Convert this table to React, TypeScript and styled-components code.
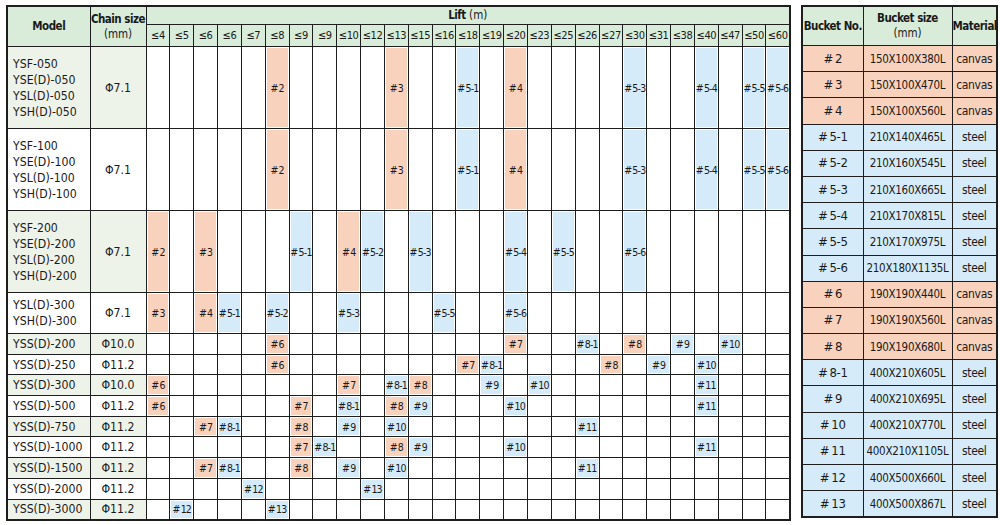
import * as React from 'react'
import styled, { createGlobalStyle } from 'styled-components'

const GlobalStyle = createGlobalStyle`
  body {
    margin: 0;
    background: #ffffff;
    font-family: "DejaVu Sans Condensed", "DejaVu Sans", sans-serif;
    font-stretch: condensed;
    color: #1a1a1a;
  }
`

const HEADER = '#d9ecd9'
const SHADE = '#eef3ea'
const SALMON = '#f9d2be'
const BLUE = '#d6ebf9'
const LINE = '#1e1e1e'

type Kind = 's' | 'b'

interface IRow {
  models: string[]
  chain: string
  height: number
  shaded: boolean
  cells: Record<number, [string, Kind]>
}

const lifts = ['4', '5', '6', '6', '7', '8', '9', '9', '10', '12', '13', '15', '16', '18', '19', '20', '23', '25', '26', '27', '30', '31', '38', '40', '47', '50', '60']

const big = (n: string) => [`YSF-${n}`, `YSE(D)-${n}`, `YSL(D)-${n}`, `YSH(D)-${n}`]

const rows: IRow[] = [
  {
    models: big('050'), chain: 'Φ7.1', height: 82, shaded: true,
    cells: { 5: ['2', 's'], 10: ['3', 's'], 13: ['5-1', 'b'], 15: ['4', 's'], 20: ['5-3', 'b'], 23: ['5-4', 'b'], 25: ['5-5', 'b'], 26: ['5-6', 'b'] },
  },
  {
    models: big('100'), chain: 'Φ7.1', height: 82, shaded: false,
    cells: { 5: ['2', 's'], 10: ['3', 's'], 13: ['5-1', 'b'], 15: ['4', 's'], 20: ['5-3', 'b'], 23: ['5-4', 'b'], 25: ['5-5', 'b'], 26: ['5-6', 'b'] },
  },
  {
    models: big('200'), chain: 'Φ7.1', height: 82, shaded: true,
    cells: { 0: ['2', 's'], 2: ['3', 's'], 6: ['5-1', 'b'], 8: ['4', 's'], 9: ['5-2', 'b'], 11: ['5-3', 'b'], 15: ['5-4', 'b'], 17: ['5-5', 'b'], 20: ['5-6', 'b'] },
  },
  {
    models: ['YSL(D)-300', 'YSH(D)-300'], chain: 'Φ7.1', height: 41, shaded: false,
    cells: { 0: ['3', 's'], 2: ['4', 's'], 3: ['5-1', 'b'], 5: ['5-2', 'b'], 8: ['5-3', 'b'], 12: ['5-5', 'b'], 15: ['5-6', 'b'] },
  },
  {
    models: ['YSS(D)-200'], chain: 'Φ10.0', height: 20.7, shaded: true,
    cells: { 5: ['6', 's'], 15: ['7', 's'], 18: ['8-1', 'b'], 20: ['8', 's'], 22: ['9', 'b'], 24: ['10', 'b'] },
  },
  {
    models: ['YSS(D)-250'], chain: 'Φ11.2', height: 20.7, shaded: false,
    cells: { 5: ['6', 's'], 13: ['7', 's'], 14: ['8-1', 'b'], 19: ['8', 's'], 21: ['9', 'b'], 23: ['10', 'b'] },
  },
  {
    models: ['YSS(D)-300'], chain: 'Φ10.0', height: 20.7, shaded: true,
    cells: { 0: ['6', 's'], 8: ['7', 's'], 10: ['8-1', 'b'], 11: ['8', 's'], 14: ['9', 'b'], 16: ['10', 'b'], 23: ['11', 'b'] },
  },
  {
    models: ['YSS(D)-500'], chain: 'Φ11.2', height: 20.7, shaded: false,
    cells: { 0: ['6', 's'], 6: ['7', 's'], 8: ['8-1', 'b'], 10: ['8', 's'], 11: ['9', 'b'], 15: ['10', 'b'], 23: ['11', 'b'] },
  },
  {
    models: ['YSS(D)-750'], chain: 'Φ11.2', height: 20.7, shaded: true,
    cells: { 2: ['7', 's'], 3: ['8-1', 'b'], 6: ['8', 's'], 8: ['9', 'b'], 10: ['10', 'b'], 18: ['11', 'b'] },
  },
  {
    models: ['YSS(D)-1000'], chain: 'Φ11.2', height: 20.7, shaded: false,
    cells: { 6: ['7', 's'], 7: ['8-1', 'b'], 10: ['8', 's'], 11: ['9', 'b'], 15: ['10', 'b'], 23: ['11', 'b'] },
  },
  {
    models: ['YSS(D)-1500'], chain: 'Φ11.2', height: 20.7, shaded: true,
    cells: { 2: ['7', 's'], 3: ['8-1', 'b'], 6: ['8', 's'], 8: ['9', 'b'], 10: ['10', 'b'], 18: ['11', 'b'] },
  },
  {
    models: ['YSS(D)-2000'], chain: 'Φ11.2', height: 20.7, shaded: false,
    cells: { 4: ['12', 'b'], 9: ['13', 'b'] },
  },
  {
    models: ['YSS(D)-3000'], chain: 'Φ11.2', height: 20.7, shaded: true,
    cells: { 1: ['12', 'b'], 5: ['13', 'b'] },
  },
]

const buckets: [string, string, string, Kind][] = [
  ['2', '150X100X380L', 'canvas', 's'],
  ['3', '150X100X470L', 'canvas', 's'],
  ['4', '150X100X560L', 'canvas', 's'],
  ['5-1', '210X140X465L', 'steel', 'b'],
  ['5-2', '210X160X545L', 'steel', 'b'],
  ['5-3', '210X160X665L', 'steel', 'b'],
  ['5-4', '210X170X815L', 'steel', 'b'],
  ['5-5', '210X170X975L', 'steel', 'b'],
  ['5-6', '210X180X1135L', 'steel', 'b'],
  ['6', '190X190X440L', 'canvas', 's'],
  ['7', '190X190X560L', 'canvas', 's'],
  ['8', '190X190X680L', 'canvas', 's'],
  ['8-1', '400X210X605L', 'steel', 'b'],
  ['9', '400X210X695L', 'steel', 'b'],
  ['10', '400X210X770L', 'steel', 'b'],
  ['11', '400X210X1105L', 'steel', 'b'],
  ['12', '400X500X660L', 'steel', 'b'],
  ['13', '400X500X867L', 'steel', 'b'],
]

const Page = styled.div`
  display: flex;
  align-items: flex-start;
  gap: 10px;
  padding: 5px 0 0 6px;
`

const Grid = styled.table<{ $width: number }>`
  border-collapse: collapse;
  table-layout: fixed;
  width: ${p => p.$width}px;
  border: 2px solid ${LINE};
`

const HeadCell = styled.th<{ $h?: number }>`
  background: ${HEADER};
  border: 1px solid ${LINE};
  height: ${p => (p.$h ? `${p.$h}px` : 'auto')};
  padding: 0;
  font-size: 11.5px;
  font-weight: normal;
  line-height: 15px;
  text-align: center;
  white-space: nowrap;
  overflow: hidden;
`

const Bold = styled.span`
  font-weight: bold;
  font-size: 11.5px;
  letter-spacing: -0.5px;
`

const LiftHead = styled(HeadCell)`
  font-size: 11px;
  letter-spacing: -0.4px;
`

const ModelCell = styled.td<{ $shaded: boolean }>`
  background: ${p => (p.$shaded ? SHADE : '#ffffff')};
  border: 1px solid ${LINE};
  padding: 0 0 0 5px;
  font-size: 12.2px;
  line-height: 16px;
  white-space: nowrap;
`

const ChainCell = styled(ModelCell)`
  padding: 0;
  text-align: center;
`

const LiftCell = styled.td<{ $kind?: Kind }>`
  background: ${p => (p.$kind === 's' ? SALMON : p.$kind === 'b' ? BLUE : '#ffffff')};
  box-shadow: inset 0 0 0 1px #ffffff;
  border: 1px solid ${LINE};
  padding: 0;
  font-size: 10.5px;
  letter-spacing: -0.8px;
  text-align: center;
  white-space: nowrap;
  overflow: visible;
`

const BucketCell = styled.td<{ $kind: Kind; $size?: number }>`
  background: ${p => (p.$kind === 's' ? SALMON : BLUE)};
  border: 1px solid ${LINE};
  height: 25.2px;
  padding: 0;
  font-size: ${p => p.$size ?? 11.5}px;
  line-height: 14px;
  letter-spacing: -0.3px;
  text-align: center;
  white-space: nowrap;
  overflow: hidden;
`

const tag = (n: string) => `#\u2009${n}`

const LiftTable = () => (
  <Grid $width={785}>
    <colgroup>
      <col style={{ width: 83 }} />
      <col style={{ width: 56 }} />
      {lifts.map((_, i) => <col key={i} />)}
    </colgroup>
    <thead>
      <tr>
        <HeadCell rowSpan={2}><Bold>Model</Bold></HeadCell>
        <HeadCell rowSpan={2}><Bold>Chain size</Bold><br />(mm)</HeadCell>
        <HeadCell colSpan={lifts.length} $h={17}><Bold>Lift</Bold> (m)</HeadCell>
      </tr>
      <tr>
        {lifts.map((l, i) => <LiftHead key={i} $h={21}>≤{l}</LiftHead>)}
      </tr>
    </thead>
    <tbody>
      {rows.map((r, ri) => (
        <tr key={ri} style={{ height: r.height }}>
          <ModelCell $shaded={r.shaded}>
            {r.models.map((m, mi) => <div key={mi}>{m}</div>)}
          </ModelCell>
          <ChainCell $shaded={r.shaded}>{r.chain}</ChainCell>
          {lifts.map((_, ci) => {
            const c = r.cells[ci]
            return <LiftCell key={ci} $kind={c?.[1]}>{c ? tag(c[0]) : ''}</LiftCell>
          })}
        </tr>
      ))}
    </tbody>
  </Grid>
)

const BucketTable = () => (
  <Grid $width={195}>
    <colgroup>
      <col style={{ width: 61 }} />
      <col style={{ width: 89 }} />
      <col style={{ width: 45 }} />
    </colgroup>
    <thead>
      <tr>
        <HeadCell $h={38}><Bold>Bucket No.</Bold></HeadCell>
        <HeadCell $h={38}><Bold>Bucket size</Bold><br />(mm)</HeadCell>
        <HeadCell $h={38}><Bold>Material</Bold></HeadCell>
      </tr>
    </thead>
    <tbody>
      {buckets.map(([no, size, mat, kind]) => (
        <tr key={no}>
          <BucketCell $kind={kind} $size={13}>{tag(no)}</BucketCell>
          <BucketCell $kind={kind}>{size}</BucketCell>
          <BucketCell $kind={kind} $size={12}>{mat}</BucketCell>
        </tr>
      ))}
    </tbody>
  </Grid>
)

export default function App() {
  return (
    <>
      <GlobalStyle />
      <Page>
        <LiftTable />
        <BucketTable />
      </Page>
    </>
  )
}
